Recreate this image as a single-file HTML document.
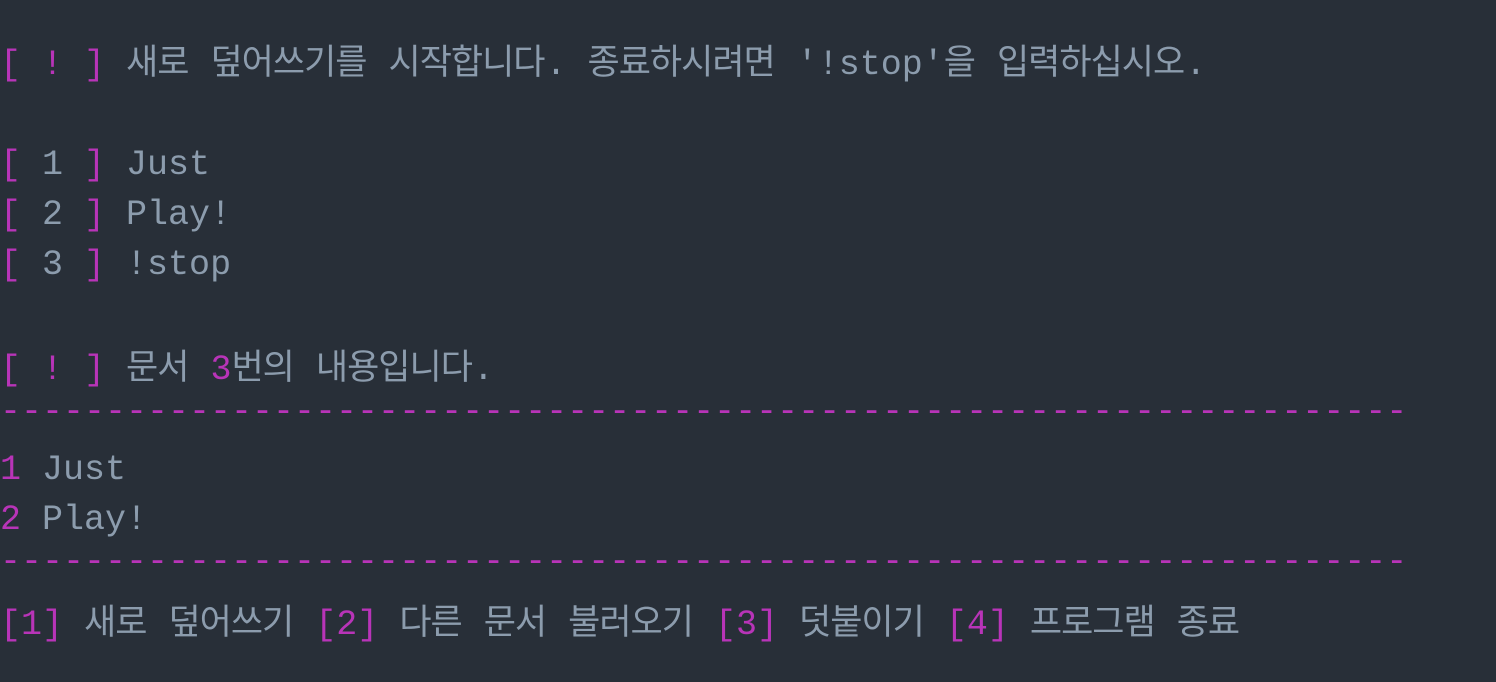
<!DOCTYPE html>
<html><head><meta charset="utf-8"><style>
html,body{margin:0;background:#282f38;width:1496px;height:682px;overflow:hidden}
pre{margin:0;padding:35px 0 0 0;font-family:"Liberation Mono","Noto Sans CJK KR",monospace;font-size:35px;line-height:50px;color:#8c9cad;white-space:pre}
.m{color:#b834b8}
.k{letter-spacing:-1px;font-family:"Noto Sans CJK KR","Liberation Mono",monospace;margin-right:1px}
.d{position:relative;top:-8px}
</style></head><body><pre><span class="m">[ ! ]</span> <span class="k">새로</span> <span class="k">덮어쓰기를</span> <span class="k">시작합니다</span>. <span class="k">종료하시려면</span> '!stop'<span class="k">을</span> <span class="k">입력하십시오</span>.

<span class="m">[</span> 1 <span class="m">]</span> Just
<span class="m">[</span> 2 <span class="m">]</span> Play!
<span class="m">[</span> 3 <span class="m">]</span> !stop

<span class="m">[ ! ]</span> <span class="k">문서</span> <span class="m">3</span><span class="k">번의</span> <span class="k">내용입니다</span>.
<span class="m d">-------------------------------------------------------------------</span>
<span class="m">1</span> Just
<span class="m">2</span> Play!
<span class="m d">-------------------------------------------------------------------</span>
<span class="m">[1]</span> <span class="k">새로</span> <span class="k">덮어쓰기</span> <span class="m">[2]</span> <span class="k">다른</span> <span class="k">문서</span> <span class="k">불러오기</span> <span class="m">[3]</span> <span class="k">덧붙이기</span> <span class="m">[4]</span> <span class="k">프로그램</span> <span class="k">종료</span></pre></body></html>
